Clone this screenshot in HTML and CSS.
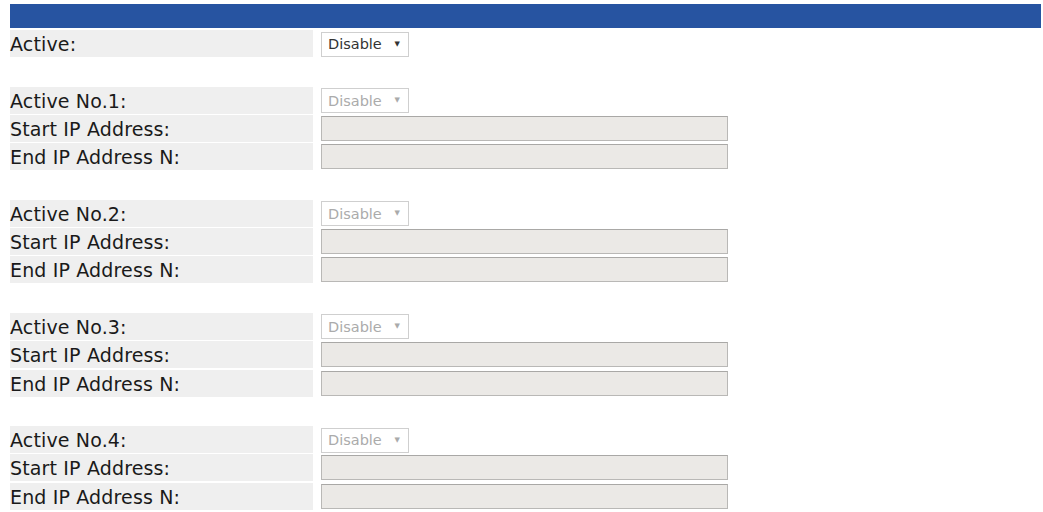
FILE: index.html
```html
<!DOCTYPE html>
<html lang="en">
  <head>
    <meta charset="UTF-8" />
    <meta name="viewport" content="width=device-width, initial-scale=1.0" />
    <title>IP Filter</title>
    <link rel="stylesheet" href="styles.css">
  </head>
  <body>
    <div class="title-bar"></div>

    <div class="form-grid">
      <div class="label">Active:</div>
      <div class="field">
        <span class="select-wrap">
          <select class="select">
            <option>Disable</option>
            <option>Enable</option>
          </select>
        </span>
      </div>

      <div class="spacer"></div>

      <!-- rule 1 -->
      <div class="label">Active No.1:</div>
      <div class="field">
        <span class="select-wrap off"><select class="select" disabled><option>Disable</option></select></span>
      </div>
      <div class="label">Start IP Address:</div>
      <div class="field"><input type="text" class="ip-input" disabled /></div>
      <div class="label">End IP Address N:</div>
      <div class="field"><input type="text" class="ip-input" disabled /></div>

      <div class="spacer"></div>

      <!-- rule 2 -->
      <div class="label">Active No.2:</div>
      <div class="field">
        <span class="select-wrap off"><select class="select" disabled><option>Disable</option></select></span>
      </div>
      <div class="label">Start IP Address:</div>
      <div class="field"><input type="text" class="ip-input" disabled /></div>
      <div class="label">End IP Address N:</div>
      <div class="field"><input type="text" class="ip-input" disabled /></div>

      <div class="spacer"></div>

      <!-- rule 3 -->
      <div class="label">Active No.3:</div>
      <div class="field">
        <span class="select-wrap off"><select class="select" disabled><option>Disable</option></select></span>
      </div>
      <div class="label">Start IP Address:</div>
      <div class="field"><input type="text" class="ip-input" disabled /></div>
      <div class="label">End IP Address N:</div>
      <div class="field"><input type="text" class="ip-input" disabled /></div>

      <div class="spacer"></div>

      <!-- rule 4 -->
      <div class="label">Active No.4:</div>
      <div class="field">
        <span class="select-wrap off"><select class="select" disabled><option>Disable</option></select></span>
      </div>
      <div class="label">Start IP Address:</div>
      <div class="field"><input type="text" class="ip-input" disabled /></div>
      <div class="label">End IP Address N:</div>
      <div class="field"><input type="text" class="ip-input" disabled /></div>
    </div>
  </body>
</html>
```

FILE: styles.css
```css
body {
  font-family: "DejaVu Sans", Verdana, sans-serif;
  background: #ffffff;
  margin: 0;
  padding: 4px 2px 0 10px;
  color: #1a1a1a;
}

.title-bar {
  height: 24px;
  background-color: #2754a1; /* blue section header */
}

.form-grid {
  display: grid;
  grid-template-columns: 303px 1fr;
  grid-auto-rows: 27px;
  column-gap: 8px;
  row-gap: 1.3px;
  margin-top: 2px;
}

.label {
  background-color: #efefef;
  font-size: 19px;
  letter-spacing: 0.15px;
  line-height: 28px;
  white-space: nowrap;
}

.field {
  display: flex;
  align-items: center;
}

.spacer {
  grid-column: 1 / 3;
}

/* drop-down with its own small arrow */
.select-wrap {
  position: relative;
  display: inline-block;
  margin-top: 1px;
}
.select-wrap::after {
  content: "\25BC";
  position: absolute;
  right: 9px;
  top: 8px;
  font-size: 7px;
  color: #333;
  pointer-events: none;
}
.select-wrap.off::after {
  color: #aaa;
}
.select {
  -webkit-appearance: none;
  appearance: none;
  width: 88px;
  height: 25px;
  padding: 0 0 0 6px;
  font-family: "DejaVu Sans", Verdana, sans-serif;
  font-size: 14.5px;
  color: #333;
  background: #ffffff;
  border: 1px solid #cfcfcf;
  border-radius: 0;
}
.select:disabled {
  color: #ababab;
  opacity: 1;
}

.ip-input {
  width: 407px;
  height: 25px;
  box-sizing: border-box;
  background-color: #ebe9e6;
  border: 1px solid #b9b8b6;
  border-top-color: #a9a8a6;
  padding: 0 4px;
  margin: 0;
}
```
